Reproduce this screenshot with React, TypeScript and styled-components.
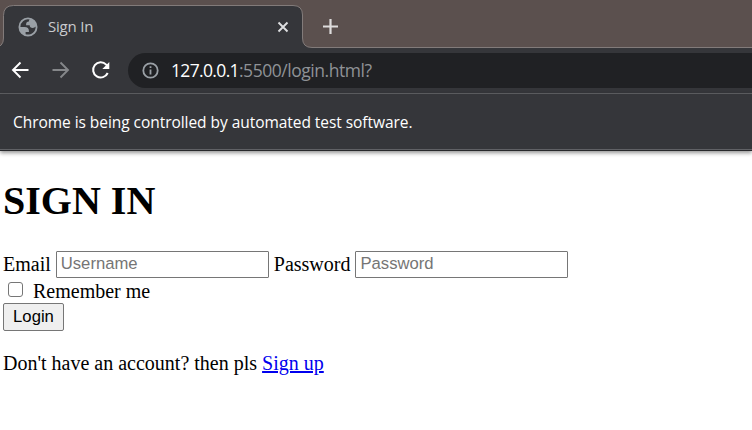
import React from "react";
import styled, { createGlobalStyle } from "styled-components";

const GlobalStyle = createGlobalStyle`
  * { box-sizing: border-box; }
  body { margin: 0; background: #fff; overflow: hidden; }
`;

const uiFont = `"Segoe UI", "Open Sans", "Noto Sans", sans-serif`;

const Window = styled.div`
  display: flex;
  flex-direction: column;
  width: 100%;
  height: 430px;
  background: #fff;
`;

const TabStrip = styled.div`
  position: relative;
  display: flex;
  align-items: flex-start;
  flex: none;
  height: 48px;
  background: #5b504e;
`;

const TabOutline = styled.svg`
  position: absolute;
  inset: 0;
  width: 100%;
  height: 48px;
`;

const Tab = styled.div`
  position: relative;
  display: flex;
  align-items: center;
  width: 303px;
  height: 42px;
  margin-top: 6px;
  padding: 0 12px 0 18px;
`;

const TabTitle = styled.span`
  flex: 1;
  margin: 0 0 2px 10px;
  font: 15px/20px ${uiFont};
  letter-spacing: -0.2px;
  color: #c9cbce;
`;

const NewTab = styled.svg`
  position: relative;
  margin: 18px 0 0 19px;
`;

const Toolbar = styled.div`
  display: flex;
  align-items: center;
  flex: none;
  height: 46px;
  padding: 0 0 1px 8px;
  background: #35363a;
  border-bottom: 1px solid #5f6063;
`;

const NavIcon = styled.svg`
  flex: none;
  width: 24px;
  height: 24px;
  margin-right: 16px;
  overflow: visible;
`;

const Omnibox = styled.div`
  display: flex;
  align-items: center;
  flex: 1;
  height: 35px;
  padding-left: 14px;
  background: #202124;
  border-radius: 18px 0 0 18px;
`;

const Address = styled.span`
  margin-left: 12px;
  font: 17.5px/24px ${uiFont};
  letter-spacing: -0.46px;
  color: #8f9296;
  white-space: pre;
`;

const Host = styled.span`
  color: #fff;
  letter-spacing: -0.65px;
`;

const InfoBar = styled.div`
  position: relative;
  flex: none;
  height: 57px;
  padding: 18px 13px 0;
  background: #35363a;
  border-bottom: 1px solid #28292c;
  box-shadow: inset 0 -1px #606165, 0 2px 4px rgba(0, 0, 0, 0.42);
  font: 15.5px/21px ${uiFont};
  letter-spacing: -0.05px;
  color: #fff;
  white-space: nowrap;
`;

const Page = styled.main`
  padding: 27px 3px 0;
  font: 20px/23px "Liberation Serif", "Times New Roman", serif;
  color: #000;
`;

const Heading = styled.h1`
  margin: 0 0 26px;
  font-size: 40px;
  line-height: 46px;
  font-weight: bold;
`;

const FieldRow = styled.div`
  display: flex;
  align-items: center;
  height: 28px;
  gap: 5px;
`;

const Field = styled.input`
  width: 213px;
  height: 27px;
  margin: 0;
  padding: 1px 4px;
  border: 1px solid #767676;
  border-radius: 1px;
  background: #fff;
  font: 16.667px/20px "Liberation Sans", Arial, sans-serif;
  &::placeholder { color: #757575; }
`;

const RememberRow = styled.label`
  display: flex;
  align-items: center;
  height: 25px;
  padding: 2px 0 0 5px;
  gap: 10px;
`;

const Check = styled.input`
  appearance: none;
  width: 15px;
  height: 15px;
  margin: 0 0 5px;
  border: 1px solid #767676;
  border-radius: 3px;
  background: #fff;
`;

const LoginButton = styled.button`
  display: block;
  width: 61px;
  height: 28px;
  margin: 0;
  padding: 0 0 1px;
  border: 1px solid #767676;
  border-radius: 2px;
  background: #efefef;
  color: #000;
  font: 16.667px/20px "Liberation Sans", Arial, sans-serif;
`;

const Prompt = styled.p`
  margin: 21px 0 0;
`;

const Link = styled.a`
  color: #0000ee;
  text-decoration: underline;
`;

export default function App() {
  return (
    <Window>
      <GlobalStyle />
      <TabStrip>
        <TabOutline viewBox="0 0 752 48" preserveAspectRatio="xMinYMin slice">
          <path
            d="M-6 47.5Q3.5 47.5 3.5 38V15.5Q3.5 5.5 13.5 5.5H293Q302.500 5.500 302.500 15V38Q302.500 47.500 312 47.500H760V50H-6Z"
            fill="#35363a"
            stroke="#827b7a"
          />
        </TabOutline>
        <Tab>
          <svg width="20" height="20" viewBox="1.5 1.5 21 21" fill="#9aa0a6">
            <path
              fillRule="evenodd"
              d="M12 2a10 10 0 1 1 0 20a10 10 0 0 1 0-20ZM4 12h4.400c3.407.022 4.922 1.730 4.543 5.127H9.488v2.470a8.004 8.004 0 0 0 10.498-8.083C19.327 12.504 18.332 13 17 13c-2.137 0-3.206-.916-3.206-2.750h-3.748c-.274-2.728.683-4.092 2.870-4.092 0-.975.327-1.597.811-1.970A8.004 8.004 0 0 0 4 12Z"
            />
          </svg>
          <TabTitle>Sign In</TabTitle>
          <svg width="16" height="16" viewBox="0 0 16 16" stroke="#dedfe1" strokeWidth="1.900">
            <path d="M3.500 3.500l9 9M12.500 3.500l-9 9" />
          </svg>
        </Tab>
        <NewTab width="17" height="17" viewBox="0 0 17 17" stroke="#dedcdc" strokeWidth="2.200">
          <path d="M8.500 1v15M1 8.500h15" />
        </NewTab>
      </TabStrip>
      <Toolbar>
        <NavIcon viewBox="0 0 24 24" fill="none" stroke="#fff" strokeWidth="1.900">
          <path d="M20.500 12H5.500M12.500 4.500L5 12l7.500 7.500" />
        </NavIcon>
        <NavIcon viewBox="0 0 24 24" fill="none" stroke="#85878a" strokeWidth="1.900">
          <path d="M4.500 12H19.500M12.500 4.500L20 12l-7.500 7.500" />
        </NavIcon>
        <NavIcon viewBox="0 0 24 24" fill="none" stroke="#fff" strokeWidth="2">
          <path d="M19.700 15a7.600 7.600 0 1 1-1.500-8.400l1.300 1.500" />
          <path d="M21.300 4v7h-7Z" fill="#fff" stroke="none" />
        </NavIcon>
        <Omnibox>
          <svg width="17" height="17" viewBox="0 0 17 17" fill="none" stroke="#9aa0a6" strokeWidth="1.800">
            <circle cx="8.500" cy="8.500" r="7.200" />
            <path d="M8.500 7.500v5M8.500 4.300v1.700" />
          </svg>
          <Address>
            <Host>127.0.0.1</Host>:5500/login.html?
          </Address>
        </Omnibox>
      </Toolbar>
      <InfoBar>Chrome is being controlled by automated test software.</InfoBar>
      <Page>
        <Heading>SIGN IN</Heading>
        <FieldRow>
          <label htmlFor="email">Email</label>
          <Field id="email" placeholder="Username" />
          <label htmlFor="password">Password</label>
          <Field id="password" type="password" placeholder="Password" />
        </FieldRow>
        <RememberRow>
          <Check type="checkbox" />
          Remember me
        </RememberRow>
        <LoginButton type="button">Login</LoginButton>
        <Prompt>
          Don't have an account? then pls <Link href="#">Sign up</Link>
        </Prompt>
      </Page>
    </Window>
  );
}
